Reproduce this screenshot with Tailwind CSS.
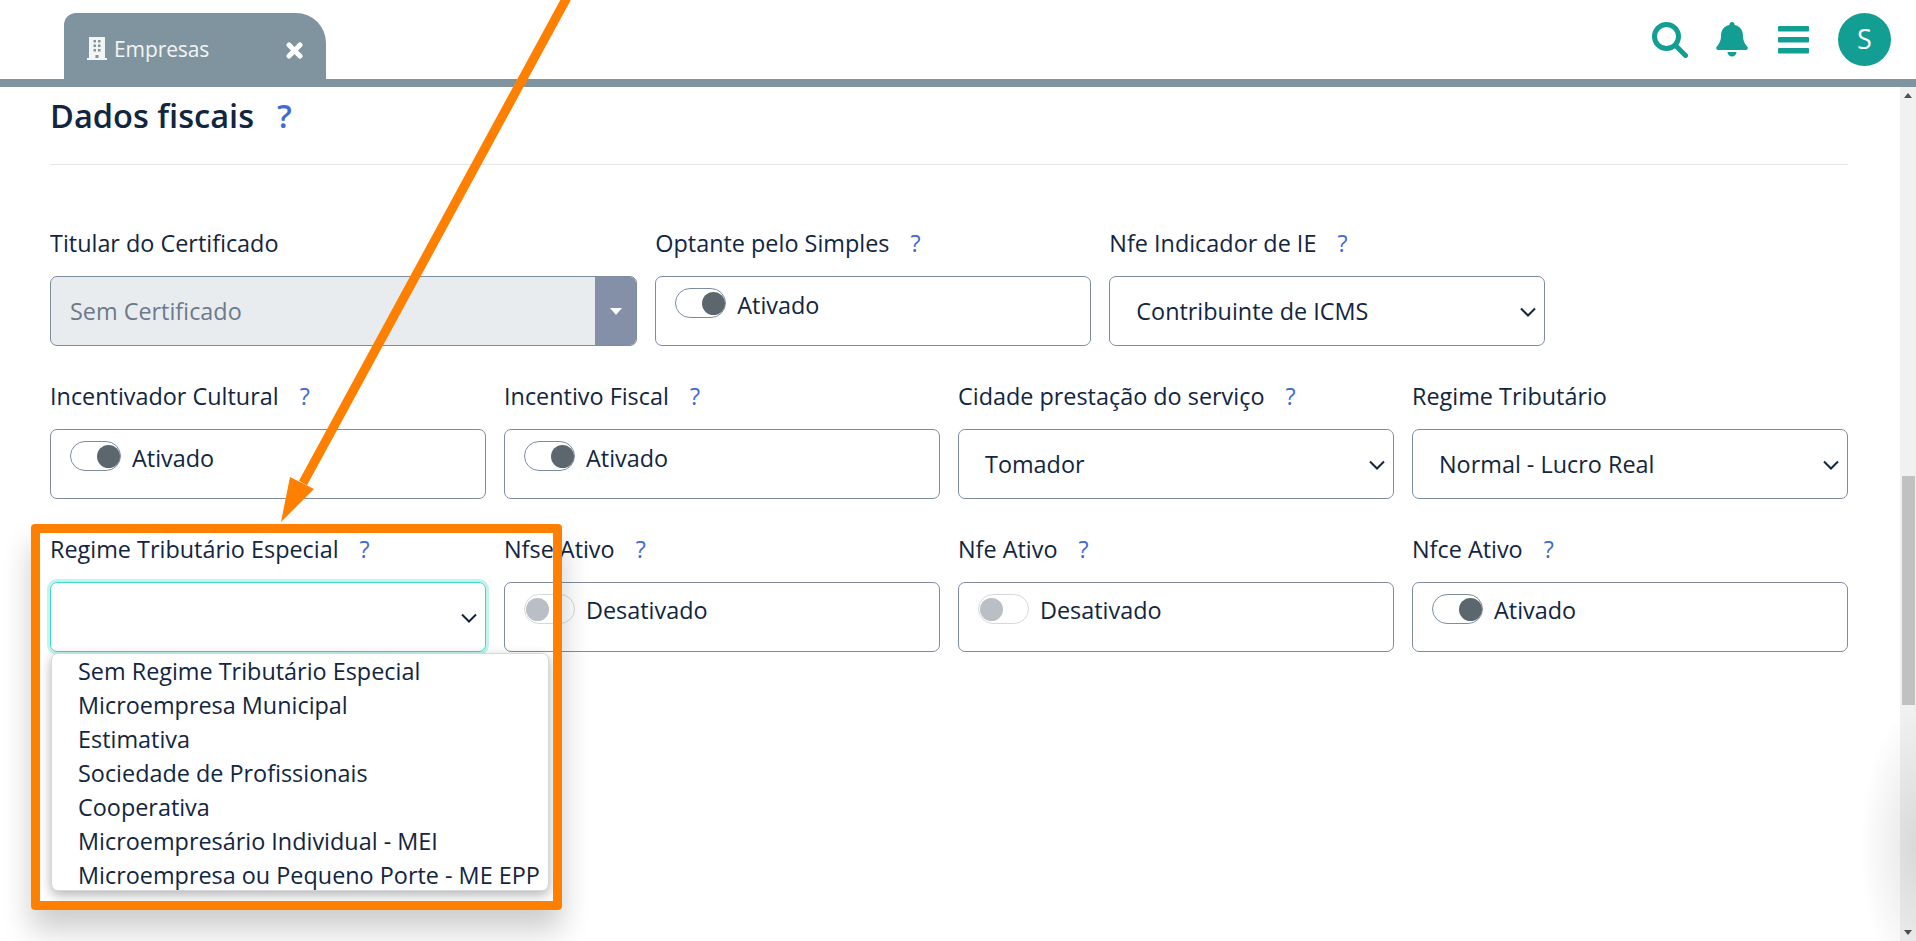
<!DOCTYPE html>
<html lang="pt-BR">
<head>
    <meta charset="UTF-8">
    <title>Empresas - Dados fiscais</title>
    <script src="https://cdn.jsdelivr.net/npm/@tailwindcss/browser@4"></script>
</head>
<body class="h-screen overflow-hidden bg-white font-['Open_Sans','Noto_Sans',sans-serif] text-[#12263f]">
    <div class="relative flex flex-col h-[941px] w-[1916px] overflow-hidden">
        <!-- topo -->
        <header class="flex items-end justify-between h-[87px] border-b-[8px] border-[#7f949e] shrink-0">
            <div class="flex items-center justify-between w-[262px] h-[66px] ml-[64px] pt-[8px] pl-[23px] pr-[23px] bg-[#7f949e] rounded-tl-[12px] rounded-tr-[30px] text-white">
                <span class="flex items-center gap-[7px] text-[21px] tracking-[-0.1px] text-white/90">
                    <svg width="20" height="23" viewBox="0 0 20 23" fill="currentColor" class="-mt-[3px]"><path fill-rule="evenodd" d="M2 0h16v21h2v2H0v-2h2zM6.500 3v2.500h2.500V3zm4.500 0v2.500h2.500V3zM6.500 7.500V10h2.500V7.500zm4.500 0V10h2.500V7.500zM6.500 12v2.500h2.500V12zm4.500 0v2.500h2.500V12zM8.500 18v3h3v-3z"/></svg>
                    Empresas
                </span>
                <svg width="17" height="17" viewBox="0 0 17 17" stroke="white" stroke-width="5" stroke-linecap="round"><path d="M3 3l11 11M14 3L3 14"/></svg>
            </div>
            <div class="flex items-center mb-[13px] mr-[25px] text-[#139e94]">
                <svg width="36" height="36" viewBox="0 0 36 36" fill="none" stroke="currentColor" class="mr-[28px]"><circle cx="14.500" cy="14.500" r="12" stroke-width="5"/><path d="M24 24l9.500 9.500" stroke-width="5" stroke-linecap="round"/></svg>
                <svg width="32" height="36" viewBox="0 0 32 36" fill="currentColor" class="mr-[30px]"><path d="M16 0a2.500 2.500 0 0 1 2.500 3c6 1 8.500 6 8.500 11 0 6 3 9 4.500 11 .8 1.300 0 3-1.500 3H2c-1.500 0-2.300-1.700-1.500-3C2 23 5 20 5 14c0-5 2.500-10 8.500-11A2.500 2.500 0 0 1 16 0zM11.500 30h9a4.500 4.500 0 0 1-9 0z"/></svg>
                <svg width="31" height="28" viewBox="0 0 31 28" fill="currentColor" class="mr-[29px]"><rect width="31" height="5.500" rx="1"/><rect y="11" width="31" height="5.500" rx="1"/><rect y="22" width="31" height="5.500" rx="1"/></svg>
                <div class="flex items-center justify-center w-[53px] h-[53px] rounded-full bg-[#139e94] text-white text-[27px]">S</div>
            </div>
        </header>

        <div class="flex flex-1 min-h-0">
            <main class="flex-1 px-[50px] pr-[52px]">
                <h1 class="flex items-center h-[60px] -translate-y-[1px] text-[32.600px] leading-none font-semibold">
                    Dados fiscais
                    <span class="ml-[23px] text-[#3f6ad8]">?</span>
                </h1>
                <hr class="mt-[17px] border-[#e3e6ea]">

                <form class="grid grid-cols-12 gap-x-[18px] gap-y-[35px] mt-[63px] text-[23.400px]">
                    <!-- linha 1 -->
                    <div class="col-span-4">
                        <label class="flex items-center h-[32px] mb-[16px]">Titular do Certificado</label>
                        <div class="flex h-[70px] rounded-[7px] border border-[#7d8ca3] bg-[#e9ecef] overflow-hidden">
                            <span class="flex-1 flex items-center pt-[2px] pl-[19px] text-[#6c7a89]">Sem Certificado</span>
                            <span class="flex items-center justify-center w-[41px] bg-[#8490a7]"><span class="w-0 h-0 border-x-[6px] border-x-transparent border-t-[7px] border-t-white"></span></span>
                        </div>
                    </div>
                    <div class="col-span-3">
                        <label class="flex items-center h-[32px] mb-[16px]">Optante pelo Simples <span class="ml-[21px] text-[#3f6ad8]">?</span></label>
                        <div class="flex items-start gap-[11px] h-[70px] pt-[11px] pl-[19px] rounded-[7px] border border-[#7d8ca3]">
                            <span class="flex items-center justify-end w-[51px] h-[30px] rounded-full border border-[#7d8ca3]"><span class="w-[23px] h-[23px] rounded-full bg-[#5b676d]"></span></span>
                            <span class="leading-[30px] mt-[2px]">Ativado</span>
                        </div>
                    </div>
                    <div class="col-span-3">
                        <label class="flex items-center h-[32px] mb-[16px]">Nfe Indicador de IE <span class="ml-[21px] text-[#3f6ad8]">?</span></label>
                        <div class="flex items-center justify-between h-[70px] pt-[2px] pl-[26px] pr-[8px] rounded-[7px] border border-[#7d8ca3]">
                            Contribuinte de ICMS
                            <svg width="16" height="10" viewBox="0 0 16 10" fill="none" stroke="#12263f" stroke-width="2"><path d="M1 1.500l7 7 7-7"/></svg>
                        </div>
                    </div>
                    <div class="col-span-2"></div>

                    <!-- linha 2 -->
                    <div class="col-span-3">
                        <label class="flex items-center h-[32px] mb-[16px]">Incentivador Cultural <span class="ml-[21px] text-[#3f6ad8]">?</span></label>
                        <div class="flex items-start gap-[11px] h-[70px] pt-[11px] pl-[19px] rounded-[7px] border border-[#7d8ca3]">
                            <span class="flex items-center justify-end w-[51px] h-[30px] rounded-full border border-[#7d8ca3]"><span class="w-[23px] h-[23px] rounded-full bg-[#5b676d]"></span></span>
                            <span class="leading-[30px] mt-[2px]">Ativado</span>
                        </div>
                    </div>
                    <div class="col-span-3">
                        <label class="flex items-center h-[32px] mb-[16px]">Incentivo Fiscal <span class="ml-[21px] text-[#3f6ad8]">?</span></label>
                        <div class="flex items-start gap-[11px] h-[70px] pt-[11px] pl-[19px] rounded-[7px] border border-[#7d8ca3]">
                            <span class="flex items-center justify-end w-[51px] h-[30px] rounded-full border border-[#7d8ca3]"><span class="w-[23px] h-[23px] rounded-full bg-[#5b676d]"></span></span>
                            <span class="leading-[30px] mt-[2px]">Ativado</span>
                        </div>
                    </div>
                    <div class="col-span-3">
                        <label class="flex items-center h-[32px] mb-[16px]">Cidade prestação do serviço <span class="ml-[21px] text-[#3f6ad8]">?</span></label>
                        <div class="flex items-center justify-between h-[70px] pt-[2px] pl-[26px] pr-[8px] rounded-[7px] border border-[#7d8ca3]">
                            Tomador
                            <svg width="16" height="10" viewBox="0 0 16 10" fill="none" stroke="#12263f" stroke-width="2"><path d="M1 1.500l7 7 7-7"/></svg>
                        </div>
                    </div>
                    <div class="col-span-3">
                        <label class="flex items-center h-[32px] mb-[16px]">Regime Tributário</label>
                        <div class="flex items-center justify-between h-[70px] pt-[2px] pl-[26px] pr-[8px] rounded-[7px] border border-[#7d8ca3]">
                            Normal - Lucro Real
                            <svg width="16" height="10" viewBox="0 0 16 10" fill="none" stroke="#12263f" stroke-width="2"><path d="M1 1.500l7 7 7-7"/></svg>
                        </div>
                    </div>

                    <!-- linha 3 -->
                    <div class="relative col-span-3">
                        <label class="flex items-center h-[32px] mb-[16px]">Regime Tributário Especial <span class="ml-[21px] text-[#3f6ad8]">?</span></label>
                        <div class="flex items-center justify-end h-[70px] pt-[2px] pr-[8px] rounded-[7px] border border-[#3fd6cc] ring-[3px] ring-[#c4f3ee]">
                            <svg width="16" height="10" viewBox="0 0 16 10" fill="none" stroke="#12263f" stroke-width="2"><path d="M1 1.500l7 7 7-7"/></svg>
                        </div>
                        <ul class="absolute z-10 left-[1px] top-[119px] w-[498px] h-[238px] pl-[26px] rounded-[7px] border border-[#d5d8dc] bg-white shadow-[0_4px_12px_rgba(0,0,0,0.3)] whitespace-nowrap leading-[34px]">
                            <li>Sem Regime Tributário Especial</li>
                            <li>Microempresa Municipal</li>
                            <li>Estimativa</li>
                            <li>Sociedade de Profissionais</li>
                            <li>Cooperativa</li>
                            <li>Microempresário Individual - MEI</li>
                            <li>Microempresa ou Pequeno Porte - ME EPP</li>
                        </ul>
                    </div>
                    <div class="col-span-3">
                        <label class="flex items-center h-[32px] mb-[16px]">Nfse Ativo <span class="ml-[21px] text-[#3f6ad8]">?</span></label>
                        <div class="flex items-start gap-[11px] h-[70px] pt-[11px] pl-[19px] rounded-[7px] border border-[#7d8ca3]">
                            <span class="flex items-center w-[51px] h-[30px] pl-[1px] rounded-full border border-[#d5d8dc]"><span class="w-[23px] h-[23px] rounded-full bg-[#b9bfc5]"></span></span>
                            <span class="leading-[30px] mt-[1px]">Desativado</span>
                        </div>
                    </div>
                    <div class="col-span-3">
                        <label class="flex items-center h-[32px] mb-[16px]">Nfe Ativo <span class="ml-[21px] text-[#3f6ad8]">?</span></label>
                        <div class="flex items-start gap-[11px] h-[70px] pt-[11px] pl-[19px] rounded-[7px] border border-[#7d8ca3]">
                            <span class="flex items-center w-[51px] h-[30px] pl-[1px] rounded-full border border-[#d5d8dc]"><span class="w-[23px] h-[23px] rounded-full bg-[#b9bfc5]"></span></span>
                            <span class="leading-[30px] mt-[1px]">Desativado</span>
                        </div>
                    </div>
                    <div class="col-span-3">
                        <label class="flex items-center h-[32px] mb-[16px]">Nfce Ativo <span class="ml-[21px] text-[#3f6ad8]">?</span></label>
                        <div class="flex items-start gap-[11px] h-[70px] pt-[11px] pl-[19px] rounded-[7px] border border-[#7d8ca3]">
                            <span class="flex items-center justify-end w-[51px] h-[30px] rounded-full border border-[#7d8ca3]"><span class="w-[23px] h-[23px] rounded-full bg-[#5b676d]"></span></span>
                            <span class="leading-[30px] mt-[1px]">Ativado</span>
                        </div>
                    </div>
                </form>
            </main>

            <!-- barra de rolagem -->
            <aside class="flex flex-col items-center justify-between w-[16px] shrink-0 bg-[#f1f1f1] py-[6px]">
                <span class="w-0 h-0 border-x-[4px] border-x-transparent border-b-[5px] border-b-[#505050]"></span>
                <span class="w-0 h-0 border-x-[4px] border-x-transparent border-t-[5px] border-t-[#505050]"></span>
            </aside>
        </div>
        <div class="absolute left-[1902px] top-[476px] w-[13px] h-[229px] bg-[#c1c1c1]"></div>
        <!-- sombra no canto inferior direito -->
        <div class="absolute left-[1860px] top-[705px] w-[56px] h-[236px] bg-[radial-gradient(ellipse_at_100%_60%,rgba(0,0,0,0.1),transparent_70%)]"></div>

        <!-- anotação em laranja -->
        <div class="absolute z-20 left-[31px] top-[524px] w-[531px] h-[386px] rounded-[4px] border-[9px] border-[#ff8000] shadow-[0_20px_30px_rgba(0,0,0,0.2)]"></div>
        <svg class="absolute z-20 left-0 top-0" width="1916" height="941" fill="none">
            <path d="M571 -10L303 483" stroke="#ff8000" stroke-width="9.200"/>
            <path d="M281 522L290 477L314 489Z" fill="#ff8000"/>
        </svg>
    </div>
</body>
</html>
